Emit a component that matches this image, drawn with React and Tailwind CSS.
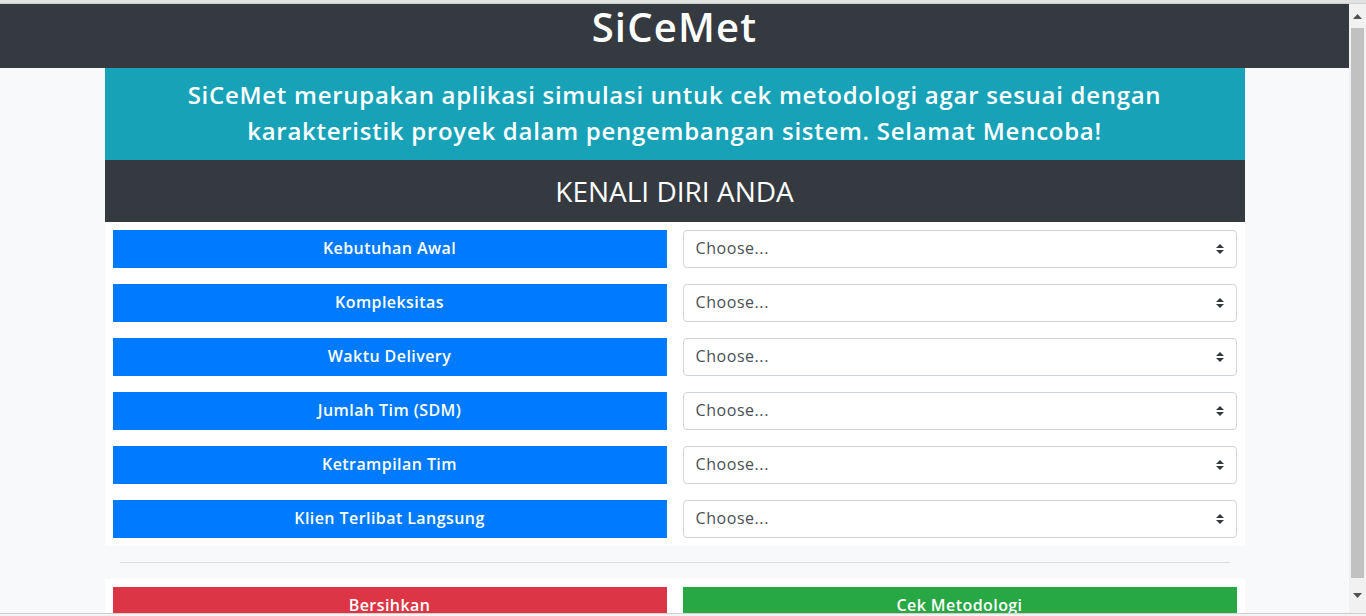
import React from "react";

const rows = [
  "Kebutuhan Awal",
  "Kompleksitas",
  "Waktu Delivery",
  "Jumlah Tim (SDM)",
  "Ketrampilan Tim",
  "Klien Terlibat Langsung",
];

function SelectArrow() {
  return (
    <svg width="8" height="10" viewBox="0 0 8 10" className="shrink-0">
      <path d="M0 4 L4 0 L8 4 Z" fill="#343a40" />
      <path d="M0 6 L4 10 L8 6 Z" fill="#343a40" />
    </svg>
  );
}

export default function App() {
  const font = { fontFamily: '"Open Sans", "Noto Sans", sans-serif' };
  return (
    <div
      className="h-[616px] w-[1366px] overflow-hidden flex flex-col bg-[#f8f9fa]"
      style={font}
    >
      <div className="h-[4px] shrink-0 bg-[#e2e2e2] border-b border-[#cfcfcf]" />
      <div className="flex flex-1 min-h-0">
        <main className="w-[1349px] shrink-0 flex flex-col">
          <header className="h-[64px] shrink-0 bg-[#343a40] flex justify-center">
            <h1 className="text-white text-[40px] leading-[46px] font-semibold tracking-[0.03em]">SiCeMet</h1>
          </header>
          <div className="w-[1140px] mx-auto flex flex-col">
            <div className="bg-[#17a2b8] pt-[9px] pb-[11px] text-center text-white text-[24px] leading-[36px] font-semibold tracking-[0.03em]">
              SiCeMet merupakan aplikasi simulasi untuk cek metodologi agar sesuai dengan
              <br />
              karakteristik proyek dalam pengembangan sistem. Selamat Mencoba!
            </div>
            <div className="bg-[#343a40] h-[62px] flex items-center justify-center text-white text-[28px] font-medium pb-px">
              KENALI DIRI ANDA
            </div>
            <div className="bg-white p-2 grid grid-cols-2 gap-4">
              {rows.map((r) => (
                <React.Fragment key={r}>
                  <div className="h-[38px] bg-[#007bff] text-white text-[16px] font-semibold tracking-[0.027em] flex items-center justify-center pb-[2px]">
                    {r}
                  </div>
                  <div className="h-[38px] bg-white border border-[#ced4da] rounded-[4px] flex items-center justify-between pl-[12px] pr-[12px] text-[16px] text-[#495057] tracking-[0.035em]">
                    <span className="pb-[2px]">Choose...</span>
                    <SelectArrow />
                  </div>
                </React.Fragment>
              ))}
            </div>
            <div className="mx-[15px] my-4 h-px bg-[#dcdfe2]" />
            <div className="bg-white p-2 grid grid-cols-2 gap-4">
              <div className="h-[38px] bg-[#dc3545] text-white text-[16px] font-semibold tracking-[0.027em] flex items-center justify-center pb-[2px]">
                Bersihkan
              </div>
              <div className="h-[38px] bg-[#28a745] text-white text-[16px] font-semibold tracking-[0.027em] flex items-center justify-center pb-[2px]">
                Cek Metodologi
              </div>
            </div>
          </div>
        </main>
        <div className="w-[17px] shrink-0 bg-[#f1f1f1] flex flex-col items-center">
          <div className="h-[24px] w-full flex items-center justify-center">
            <svg width="9" height="5" viewBox="0 0 9 5">
              <path d="M0 5 L4.5 0 L9 5 Z" fill="#505050" />
            </svg>
          </div>
          <div className="w-[13px] h-[550px] bg-[#c1c1c1]" />
          <div className="flex-1 w-full flex items-center justify-center">
            <svg width="9" height="5" viewBox="0 0 9 5">
              <path d="M0 0 L4.5 5 L9 0 Z" fill="#505050" />
            </svg>
          </div>
        </div>
      </div>
      <div className="h-[3px] shrink-0 bg-[#f3f3f3] border-t border-[#cfcfcf]" />
    </div>
  );
}
